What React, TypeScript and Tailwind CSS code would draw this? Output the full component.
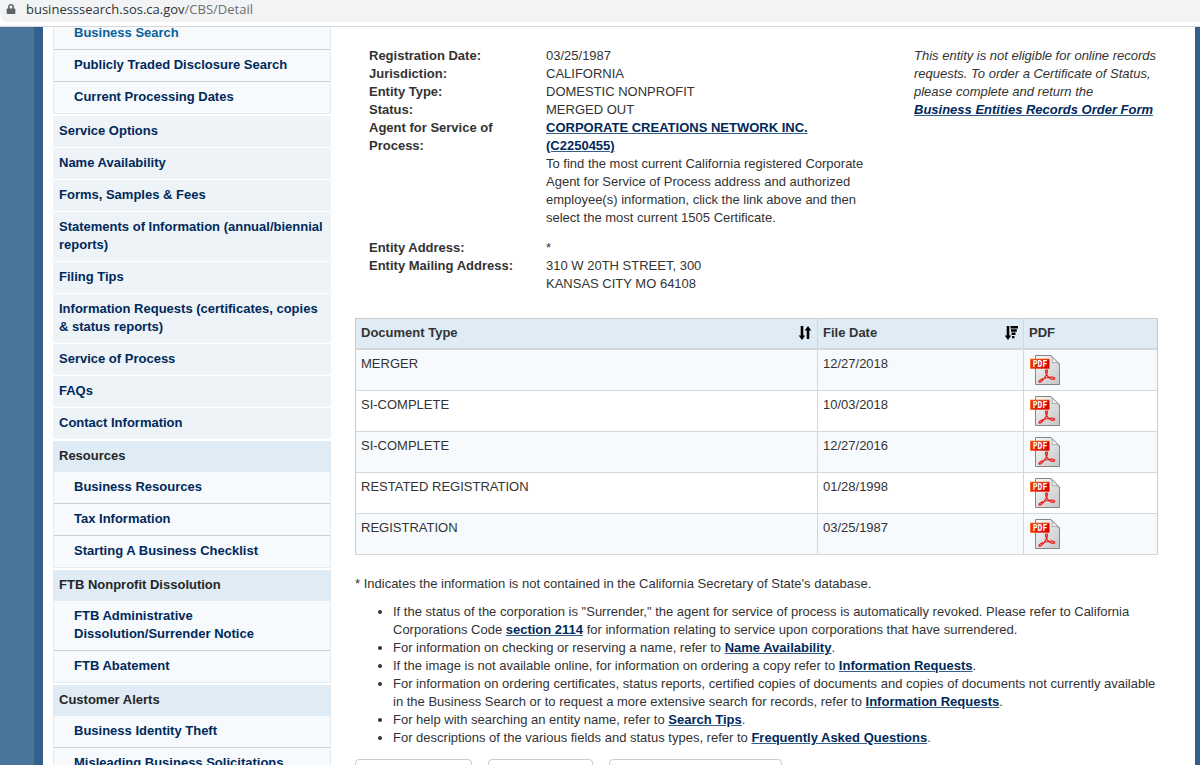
import { FaLock } from 'react-icons/fa';

type Group = { title?: string; links: string[]; active?: string };

const services = [
  'Service Options',
  'Name Availability',
  'Forms, Samples & Fees',
  'Statements of Information (annual/biennial reports)',
  'Filing Tips',
  'Information Requests (certificates, copies & status reports)',
  'Service of Process',
  'FAQs',
  'Contact Information',
];

const search: Group = {
  links: [
    'Business Search',
    'Publicly Traded Disclosure Search',
    'Current Processing Dates',
  ],
  active: 'Business Search',
};

const groups: Group[] = [
  {
    title: 'Resources',
    links: [
      'Business Resources',
      'Tax Information',
      'Starting A Business Checklist',
    ],
  },
  {
    title: 'FTB Nonprofit Dissolution',
    links: [
      'FTB Administrative Dissolution/Surrender Notice',
      'FTB Abatement',
    ],
  },
  {
    title: 'Customer Alerts',
    links: ['Business Identity Theft', 'Misleading Business Solicitations'],
  },
];

const documents = [
  { type: 'MERGER', date: '12/27/2018' },
  { type: 'SI-COMPLETE', date: '10/03/2018' },
  { type: 'SI-COMPLETE', date: '12/27/2016' },
  { type: 'RESTATED REGISTRATION', date: '01/28/1998' },
  { type: 'REGISTRATION', date: '03/25/1987' },
];

const TextLink = ({ children }: { children: React.ReactNode }) => (
  <a
    href="#"
    className="font-bold text-[#00295b] underline decoration-[#33608d]"
  >
    {children}
  </a>
);

const PdfIcon = () => (
  <svg width="30" height="30" viewBox="0 0 30 30" aria-hidden="true">
    <defs>
      <linearGradient id="sheet" x1="0" y1="0" x2="1" y2="1">
        <stop offset="0" stopColor="#fafafa" />
        <stop offset="1" stopColor="#c4c4c4" />
      </linearGradient>
      <linearGradient id="label" x1="0" y1="0" x2="1" y2="0">
        <stop offset="0" stopColor="#f0300a" />
        <stop offset="1" stopColor="#d60000" />
      </linearGradient>
    </defs>
    <path
      d="M5.5 .5H21l8.5 8.5v20.5h-24z"
      fill="url(#sheet)"
      stroke="#858585"
    />
    <path
      d="M21 .8l8.2 8.2c-2-1.6-4.5-1.8-7-1.2.6-2.4.2-5-1.200-7z"
      fill="#f6f6f6"
      stroke="#9a9a9a"
      strokeWidth=".8"
    />
    <path d="M0 4h19.500v9.700H0z" fill="url(#label)" />
    <path d="M0 4h19.500M.3 4v9.700" stroke="#f58a3a" strokeWidth=".8" />
    <text
      x="2.8"
      y="11.7"
      fontSize="8"
      fontWeight="700"
      fill="#fff"
      fontFamily="'DejaVu Sans Mono', monospace"
    >
      PDF
    </text>
    <path
      d="M16.5 15c-1.500 0-1 2.300 0 4.200 1.500 3 4.500 5.300 7 5 1.900-.3 1.400-1.900-1-2-4-.1-8.800 1-11.800 2.500-2.300 1.300-1.900 2.700-.8 2.400 2.300-.6 5.800-5.100 7.200-9 .6-2 .5-3.100-.6-3.100z"
      fill="none"
      stroke="#ee2020"
      strokeWidth="1.3"
    />
  </svg>
);

const SortBoth = () => (
  <svg width="14" height="14" viewBox="0 0 14 14" aria-hidden="true">
    <path d="M2.700 0h2.600v9.500h2L4 14 .7 9.500h2z" />
    <path d="M8.700 13V4.500h-2L10 0l3.300 4.500h-2V13z" />
  </svg>
);

const SortDown = () => (
  <svg width="14" height="14" viewBox="0 0 14 14" aria-hidden="true">
    <path d="M2.700 0h2.600v9.500h2L4 14 .7 9.500h2z" />
    <path d="M6.500 0H14v2.400H6.500zM7 3.300h5.800v2.400H7zM7.500 6.600h4V9h-4zM8 9.900h2.400v2.400H8z" />
  </svg>
);

const SubMenu = ({ links, active }: Group) => (
  <ul className="border-x border-[#dfecf5] bg-[#f6fafd]">
    {links.map((link) => (
      <li
        key={link}
        className="border-b border-[#c3d0da] last:border-[#dfecf5]"
      >
        <a
          href="#"
          className={
            link === active
              ? 'block pt-1.5 pb-[7px] pl-5 pr-8 text-[#0a609c]'
              : 'block pt-1.5 pb-[7px] pl-5 pr-8'
          }
        >
          {link}
        </a>
      </li>
    ))}
  </ul>
);

const Sidebar = () => (
  <nav className="-mt-[9px] flex w-[278px] shrink-0 flex-col gap-[2px] font-bold text-[#00295b]">
    <SubMenu {...search} />
    <ul className="flex flex-col gap-px">
      {services.map((service) => (
        <li key={service} className="bg-[#edf3f7]">
          <a href="#" className="block pt-1.5 pb-[7px] pl-1.5 pr-1">
            {service}
          </a>
        </li>
      ))}
    </ul>
    {groups.map((group) => (
      <section key={group.title}>
        <h2 className="bg-[#dfecf5] pt-1.5 pb-[7px] pl-1.5 text-[#262626]">
          {group.title}
        </h2>
        <SubMenu links={group.links} />
      </section>
    ))}
  </nav>
);

const EntityDetails = () => (
  <div className="flex px-3.5">
    <dl className="grid flex-1 grid-cols-[177px_minmax(0,1fr)] pr-10 [&>dt]:pr-8 [&>dt]:font-bold">
      <dt>Registration Date:</dt>
      <dd>03/25/1987</dd>
      <dt>Jurisdiction:</dt>
      <dd>CALIFORNIA</dd>
      <dt>Entity Type:</dt>
      <dd>DOMESTIC NONPROFIT</dd>
      <dt>Status:</dt>
      <dd>MERGED OUT</dd>
      <dt>Agent for Service of Process:</dt>
      <dd className="pb-3">
        <TextLink>CORPORATE CREATIONS NETWORK INC. (C2250455)</TextLink>
        <p>
          To find the most current California registered Corporate Agent for
          Service of Process address and authorized employee(s) information,
          click the link above and then select the most current 1505
          Certificate.
        </p>
      </dd>
      <dt>Entity Address:</dt>
      <dd>*</dd>
      <dt className="whitespace-nowrap">Entity Mailing Address:</dt>
      <dd>
        310 W 20TH STREET, 300
        <br />
        KANSAS CITY MO 64108
      </dd>
    </dl>
    <p className="-mr-3.5 w-[244px] shrink-0 italic">
      This entity is not eligible for online records requests. To order a
      Certificate of Status, please complete and return the
      <br />
      <TextLink>Business Entities Records Order Form</TextLink>
    </p>
  </div>
);

const DocumentTable = () => (
  <table className="mt-[25px] w-full border-collapse border border-[#ccc] text-left">
    <thead>
      <tr className="border-b-2 border-[#d6d6d6] bg-[#dfecf5]">
        <th className="border-r border-[#d6d6d6] px-[5px] pt-[5px] pb-1.5">
          <div className="flex items-center justify-between">
            Document Type
            <button type="button" aria-label="Sort by document type">
              <SortBoth />
            </button>
          </div>
        </th>
        <th className="w-[206px] border-r border-[#d6d6d6] px-[5px] pt-[5px] pb-1.5">
          <div className="flex items-center justify-between">
            File Date
            <button type="button" aria-label="Sort by file date">
              <SortDown />
            </button>
          </div>
        </th>
        <th className="w-[134px] px-[5px] pt-[5px] pb-1.5">PDF</th>
      </tr>
    </thead>
    <tbody>
      {documents.map((doc) => (
        <tr
          key={doc.type + doc.date}
          className="border-b border-[#d6d6d6] align-top odd:bg-[#f6fafd]"
        >
          <td className="border-r border-[#d6d6d6] p-[5px]">{doc.type}</td>
          <td className="border-r border-[#d6d6d6] p-[5px]">{doc.date}</td>
          <td className="py-[5px] pl-1.5">
            <a href="#" aria-label="PDF" className="block w-[30px]">
              <PdfIcon />
            </a>
          </td>
        </tr>
      ))}
    </tbody>
  </table>
);

const Notes = () => (
  <>
    <p className="mt-5">
      * Indicates the information is not contained in the California Secretary
      of State's database.
    </p>
    <ul className="-mr-1 mt-2.5 list-disc pl-[38px]">
      <li>
        If the status of the corporation is "Surrender," the agent for service
        of process is automatically revoked. Please refer to California
        Corporations Code <TextLink>section 2114</TextLink> for information
        relating to service upon corporations that have surrendered.
      </li>
      <li>
        For information on checking or reserving a name, refer to{' '}
        <TextLink>Name Availability</TextLink>.
      </li>
      <li>
        If the image is not available online, for information on ordering a
        copy refer to <TextLink>Information Requests</TextLink>.
      </li>
      <li>
        For information on ordering certificates, status reports, certified
        copies of documents and copies of documents not currently available in
        the Business Search or to request a more extensive search for records,
        refer to <TextLink>Information Requests</TextLink>.
      </li>
      <li>
        For help with searching an entity name, refer to{' '}
        <TextLink>Search Tips</TextLink>.
      </li>
      <li>
        For descriptions of the various fields and status types, refer to{' '}
        <TextLink>Frequently Asked Questions</TextLink>.
      </li>
    </ul>
  </>
);

const buttonClass =
  'rounded border border-[#ccc] bg-white px-[13px] py-2 text-sm';

export default function App() {
  return (
    <div className="flex h-screen flex-col overflow-hidden bg-white font-['Liberation_Sans',Arial,sans-serif] text-[13px] leading-[18px] text-[#333]">
      <header className="shrink-0 border-b border-[#d5d7da] pb-1">
        <div className="flex h-[22px] items-center gap-2.5 rounded-bl-lg bg-[#f1f3f4] pb-1 pl-1.5 font-['Open_Sans','Noto_Sans',sans-serif]">
          <FaLock className="size-2.5 text-[#5f6368]" />
          <span className="text-[#6b6f73]">
            <span className="text-[#303338]">businesssearch.sos.ca.gov</span>
            /CBS/Detail
          </span>
        </div>
      </header>
      <div className="flex min-h-0 flex-1 overflow-hidden border-r-[5px] border-[#33608d]">
        <div className="w-[43px] shrink-0 border-r-[9px] border-[#33608d] bg-[#4b769c]" />
        <div className="flex min-w-0 flex-1 pl-2.5">
          <Sidebar />
          <main className="min-w-0 flex-1 pl-6 pr-[37px] pt-5">
            <EntityDetails />
            <DocumentTable />
            <Notes />
            <div className="mt-3 flex gap-4">
              <button type="button" className={buttonClass}>
                Modify Search
              </button>
              <button type="button" className={buttonClass}>
                New Search
              </button>
              <button type="button" className={buttonClass}>
                Back to Search Results
              </button>
            </div>
          </main>
        </div>
      </div>
    </div>
  );
}
